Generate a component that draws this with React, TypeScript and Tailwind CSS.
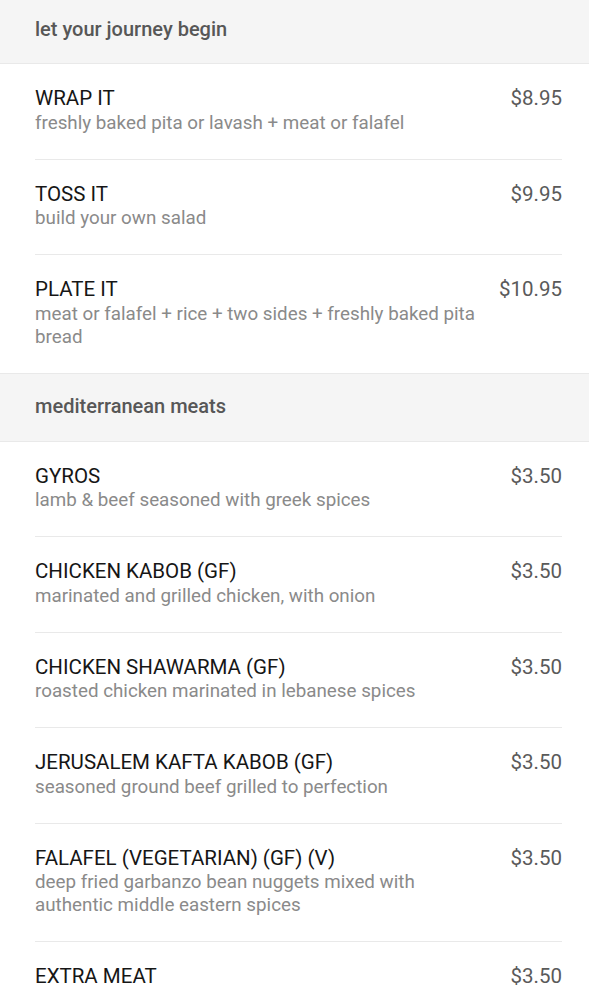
import React from "react";

type Item = { name: string; desc?: string; price: string };

const sections: { title: string; items: Item[] }[] = [
  {
    title: "let your journey begin",
    items: [
      { name: "WRAP IT", desc: "freshly baked pita or lavash + meat or falafel", price: "$8.95" },
      { name: "TOSS IT", desc: "build your own salad", price: "$9.95" },
      { name: "PLATE IT", desc: "meat or falafel + rice + two sides + freshly baked pita bread", price: "$10.95" },
    ],
  },
  {
    title: "mediterranean meats",
    items: [
      { name: "GYROS", desc: "lamb & beef seasoned with greek spices", price: "$3.50" },
      { name: "CHICKEN KABOB (GF)", desc: "marinated and grilled chicken, with onion", price: "$3.50" },
      { name: "CHICKEN SHAWARMA (GF)", desc: "roasted chicken marinated in lebanese spices", price: "$3.50" },
      { name: "JERUSALEM KAFTA KABOB (GF)", desc: "seasoned ground beef grilled to perfection", price: "$3.50" },
      { name: "FALAFEL (VEGETARIAN) (GF) (V)", desc: "deep fried garbanzo bean nuggets mixed with authentic middle eastern spices", price: "$3.50" },
      { name: "EXTRA MEAT", price: "$3.50" },
    ],
  },
];

export default function App() {
  return (
    <div className="w-[589px] h-[1000px] overflow-hidden bg-white" style={{ fontFamily: "Roboto, 'Noto Sans', sans-serif" }}>
      <div className="-mt-[5px]">
        {sections.map((s) => (
          <div key={s.title}>
            <div className="h-[69px] flex items-center pl-[35px] pb-[2px] bg-[#f5f5f5] border-y border-[#e9e9e9]">
              <span className="text-[20px] font-medium text-[#575757]">{s.title}</span>
            </div>
            <div className="pl-[35px] pr-[27px]">
              {s.items.map((it, i) => (
                <div
                  key={it.name}
                  className={`flex justify-between pt-[21px] pb-[24px] ${i < s.items.length - 1 ? "border-b border-[#e9e9e9]" : ""}`}
                >
                  <div className="min-w-0 flex-1 max-w-[450px]">
                    <div className="text-[20.5px] leading-[26.5px] text-[#161616]">{it.name}</div>
                    {it.desc && <div className="text-[18.8px] leading-[23px] text-[#8a8a8a]">{it.desc}</div>}
                  </div>
                  <div className="shrink-0 pl-3 text-[20.5px] leading-[26.5px] text-[#5a5a5a]">{it.price}</div>
                </div>
              ))}
            </div>
          </div>
        ))}
      </div>
    </div>
  );
}
